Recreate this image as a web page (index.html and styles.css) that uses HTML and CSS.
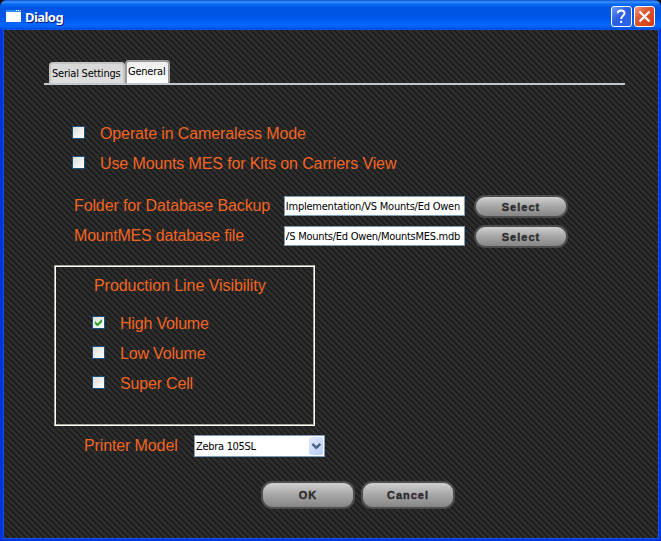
FILE: index.html
```html
<!DOCTYPE html>
<html lang="en">
<head>
<meta charset="utf-8">
<title>Dialog</title>
<link rel="stylesheet" href="styles.css">
</head>
<body>
<div class="window">
  <header class="titlebar">
    <svg class="app-icon" width="15" height="12" viewBox="0 0 15 12"><rect width="15" height="12" fill="#fff"/><rect width="15" height="2" fill="#2e8df5"/><rect x="10" width="1" height="1" fill="#fff"/><rect x="12" width="1" height="1" fill="#fff"/><rect x="14" width="1" height="1" fill="#e95"/></svg>
    <h1 class="title">Dialog</h1>
    <button class="caption-btn help" aria-label="Help"><svg width="21" height="21" viewBox="0 0 21 21"><path d="M6.7 7.2C6.7 3.6 13.5 3.3 13.5 7.3C13.5 9.8 10.2 9.8 10.2 13M10.2 14.8V17" fill="none" stroke="#fff" stroke-width="2"/></svg></button>
    <button class="caption-btn close" aria-label="Close"><svg width="21" height="21" viewBox="0 0 21 21"><path d="M5.5 5.5L15.5 15.5M15.5 5.5L5.5 15.5" fill="none" stroke="#fff" stroke-width="2.3"/></svg></button>
  </header>
  <main class="content">
    <nav class="tabs">
      <span class="tab">Serial Settings</span><span class="tab active">General</span>
    </nav>
    <div class="options">
      <label class="check"><i class="box"></i><span>Operate in Cameraless Mode</span></label>
      <label class="check"><i class="box"></i><span>Use Mounts MES for Kits on Carriers View</span></label>
    </div>
    <div class="paths">
      <div class="path-row"><span class="path-label">Folder for Database Backup</span><div class="field"><div class="value">Implementation/VS Mounts/Ed Owen</div></div><button class="pill small">Select</button></div>
      <div class="path-row"><span class="path-label file-label">MountMES database file</span><div class="field"><div class="value clipped">VS Mounts/Ed Owen/MountsMES.mdb</div></div><button class="pill small">Select</button></div>
    </div>
    <section class="group">
      <h2 class="group-title">Production Line Visibility</h2>
      <label class="check"><i class="box"><svg width="11" height="11" viewBox="0 0 11 11"><path d="M2 4V7L4 9H5L9 5V2L4.5 6.5Z" fill="#21a121"/></svg></i><span>High Volume</span></label>
      <label class="check"><i class="box"></i><span>Low Volume</span></label>
      <label class="check"><i class="box"></i><span>Super Cell</span></label>
    </section>
    <div class="printer">
      <span class="printer-label">Printer Model</span>
      <div class="combo"><span>Zebra 105SL</span><i class="arrow"><svg width="14" height="18" viewBox="0 0 14 18"><path d="M3.3 6.8L7.3 10.8L11.3 6.8" fill="none" stroke="#4d6185" stroke-width="2.4"/></svg></i></div>
    </div>
    <footer class="actions"><button class="pill">OK</button><button class="pill">Cancel</button></footer>
  </main>
</div>
</body>
</html>
```
FILE: styles.css
```css
* { box-sizing: border-box; }
body { margin: 0; background: #17120f; font-family: "Liberation Sans", sans-serif; }
button { padding: 0; margin: 0; }
.window {
  width: 661px; height: 541px; display: flex; flex-direction: column;
  border-radius: 7px 7px 0 0; overflow: hidden; background: #0831d9;
}
.titlebar {
  height: 30px; flex: none; display: flex; align-items: flex-start; padding: 6px 6px 0;
  background: linear-gradient(#0a50d0 0, #3d95ff 2px, #0a6cf5 4px, #0054e3 8px, #0055e8 17px, #0066ff 25px, #0061f5 27px, #0040c5 30px);
}
.app-icon { margin-top: 4px; flex: none; }
.title {
  margin: 2px auto 0 4px; font: bold 13px/18px "Noto Sans", sans-serif; color: #fff;
  letter-spacing: -.55px; text-shadow: 1px 1px #0a1883;
}
.caption-btn {
  width: 21px; height: 21px; border: 1px solid #fff; border-radius: 3px;
  display: flex; align-items: center; justify-content: center; margin-left: 2px;
}
.caption-btn svg { flex: none; }
.help { background: linear-gradient(135deg, #6f99f2, #2c5ee0 45%, #2865ee); }
.close { background: linear-gradient(135deg, #ef9a7c, #e05530 40%, #cf3a10); }
.content {
  flex: 1; margin: 0 3px 3px 4px; padding: 30px 32px 0 40px;
  background: repeating-linear-gradient(45deg, #2d2d2d 0 2.4px, #1a1a1a 2.8px 4.2426px);
  box-shadow: 0 0 0 1px #0a55ee;
}
.tabs { display: flex; align-items: flex-end; height: 25px; width: 581px; border-bottom: 2px solid #c0c9cb; padding-left: 5px; }
.tab {
  width: 76px; height: 21px; border: 2px solid #c4c4c4; border-bottom: 0; border-radius: 4px 4px 0 0;
  background: linear-gradient(#d8d8d8, #dedede); color: #000; white-space: nowrap; padding-left: 1px;
  font: 11px/19px "DejaVu Sans Condensed", sans-serif; letter-spacing: -.22px;
}
.tab.active { width: 45px; height: 23px; background: linear-gradient(#eee, #fff); border-color: #9b9b9b; }
.check { display: flex; align-items: center; height: 30px; gap: 15px; }
.check span, .path-label, .group-title, .printer-label {
  font-size: 16px; font-weight: normal; line-height: 20px; color: #f26522; white-space: nowrap; letter-spacing: -.12px;
}
.path-label.file-label { letter-spacing: -.2px; }
.box {
  width: 13px; height: 13px; flex: none; margin-bottom: 2px; border: 1px solid #1c5180;
  background: linear-gradient(135deg, #dcdcd7, #fff);
}
.box svg { display: block; }
.options { padding: 33px 0 0 28px; }
.options .check span { padding-top: 2px; }
.paths { padding: 13px 0 0 30px; }
.path-row { display: flex; align-items: center; height: 30px; }
.path-label { width: 210px; }
.field {
  width: 181px; height: 20px; border: 1px solid #7f9db9; background: #fff;
  padding: 0 4px 0 1px; font: 11px/19px "DejaVu Sans Condensed", sans-serif; color: #000; letter-spacing: -.23px;
}
.value { display: flex; justify-content: flex-end; overflow: hidden; white-space: nowrap; }
.value.clipped { letter-spacing: -.27px; }
.pill {
  width: 94px; height: 28px; border: 2px solid #4d4d4d; border-radius: 11px;
  background: linear-gradient(#d0d0d0, #aaa 45%, #858585); color: #2d2d2d;
  font: bold 11px/22px "Liberation Sans", sans-serif; letter-spacing: 1px; -webkit-text-stroke: .4px #2d2d2d;
}
.pill.small { height: 23px; margin: 1px 0 0 9px; line-height: 18px; }
.group {
  width: 261px; height: 161px; margin: 14px 0 0 10px; padding: 10px 0 0 37px;
  border: 1px solid; border-color: #aca899 #fff #fff #aca899;
  box-shadow: inset 1px 1px #fff, inset -1px -1px #aca899;
}
.group-title { margin: 0 0 12px 2px; letter-spacing: -.06px; }
.group .check span { padding-top: 2px; letter-spacing: -.18px; }
.printer { display: flex; align-items: center; height: 22px; margin: 9px 0 0 40px; }
.printer-label { width: 110px; }
.combo {
  width: 131px; height: 22px; border: 1px solid #7f9db9; background: #fff; display: flex;
  justify-content: space-between; padding: 1px; color: #000;
  font: 11px/19px "DejaVu Sans Condensed", sans-serif; letter-spacing: -.3px;
}
.arrow { width: 14px; height: 18px; border-radius: 2px; background: linear-gradient(135deg, #e1eaff, #b9cdfa); }
.arrow svg { display: block; }
.actions { display: flex; gap: 6px; margin: 24px 0 0 217px; }
```
